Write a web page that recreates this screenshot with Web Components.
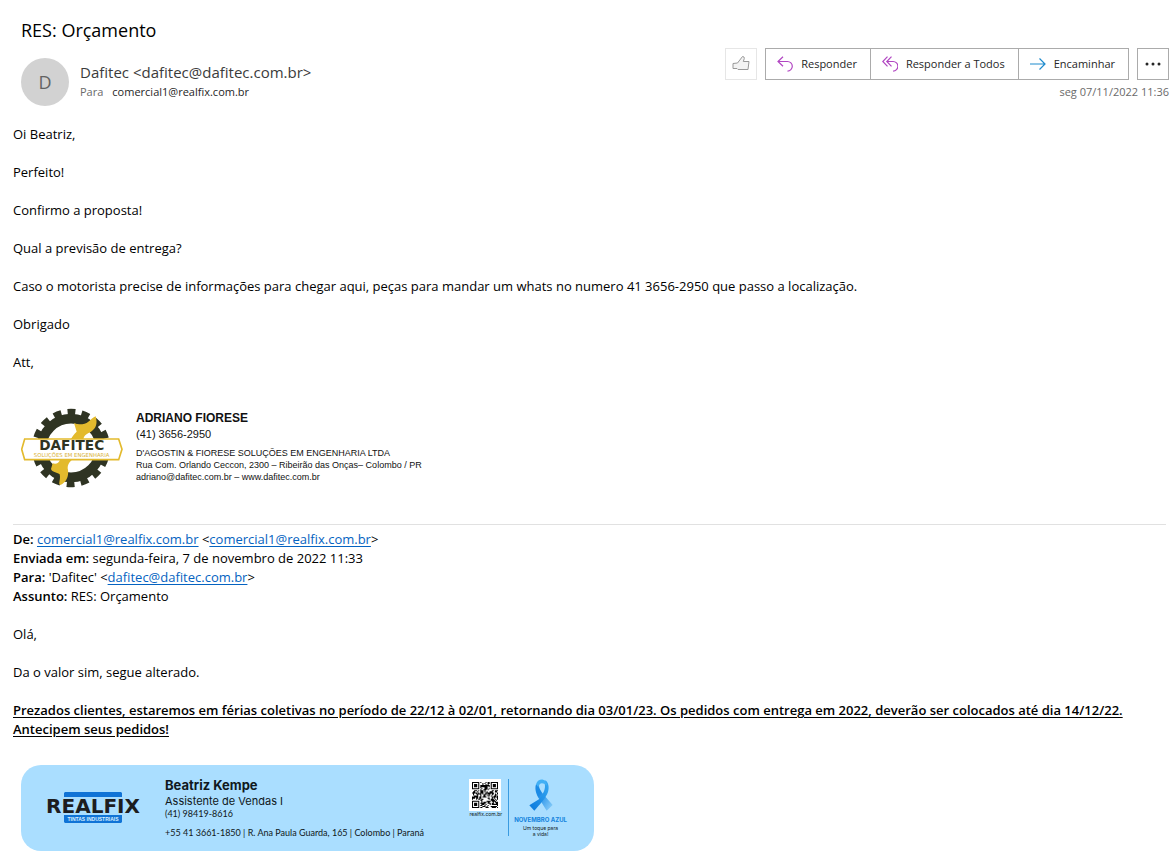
<!DOCTYPE html>
<html lang="pt-BR">
<head>
<meta charset="utf-8">
<meta name="viewport" content="width=device-width, initial-scale=1">
<title>RES: Orçamento</title>
<style>
body { margin: 0; background: #fff; color: #000; font-family: "Open Sans", "Noto Sans", sans-serif; }
</style>
</head>
<body>
<mail-header>
  <span slot="subject">RES: Orçamento</span>
  <span slot="initial">D</span>
  <span slot="from">Dafitec &lt;dafitec@dafitec.com.br&gt;</span>
  <span slot="to">comercial1@realfix.com.br</span>
  <mail-actions slot="actions"></mail-actions>
  <time slot="date" datetime="2022-11-07T11:36">seg 07/11/2022 11:36</time>
</mail-header>
<mail-body>
  <mail-text>Oi Beatriz,</mail-text>
  <mail-text>Perfeito!</mail-text>
  <mail-text>Confirmo a proposta!</mail-text>
  <mail-text>Qual a previsão de entrega?</mail-text>
  <mail-text>Caso o motorista precise de informações para chegar aqui, peças para mandar um whats no numero 41 3656-2950 que passo a localização.</mail-text>
  <mail-text>Obrigado</mail-text>
  <mail-text>Att,</mail-text>
  <dafitec-signature></dafitec-signature>
  <quoted-header></quoted-header>
  <mail-text>Olá,</mail-text>
  <mail-text>Da o valor sim, segue alterado.</mail-text>
  <mail-text notice>Prezados clientes, estaremos em férias coletivas no período de 22/12 à 02/01, retornando dia 03/01/23. Os pedidos com entrega em 2022, deverão ser colocados até dia 14/12/22. Antecipem seus pedidos!</mail-text>
  <realfix-card></realfix-card>
</mail-body>

<script>
class BaseElement extends HTMLElement {
  constructor() {
    super();
    this.attachShadow({ mode: "open" }).innerHTML = this.constructor.markup;
  }
}

customElements.define("mail-header", class extends BaseElement {
  static markup = `
    <style>
      :host { display: block; padding: 18px 3px 0 21px; }
      h1 { margin: 0 0 6px; font-size: 18px; font-weight: 400; line-height: 24px; }
      .row { display: flex; justify-content: space-between; gap: 16px; }
      .sender { display: flex; gap: 11px; padding-top: 10px; }
      .avatar { width: 48px; height: 48px; border-radius: 50%; background: #d2d2d2; color: #636363;
        font-size: 18px; line-height: 48px; text-align: center; }
      .who { padding-top: 5px; color: #3b3b3b; }
      .from { font-size: 15px; line-height: 18px; margin-bottom: 3px; }
      .to { display: flex; gap: 9px; font-size: 11px; line-height: 16px; color: #262626; }
      .label { color: #6a6a6a; }
      .side { display: flex; flex-direction: column; align-items: flex-end; gap: 4px; }
      .date { font-size: 11px; line-height: 16px; color: #6a6a6a; }
    </style>
    <h1><slot name="subject"></slot></h1>
    <div class="row">
      <div class="sender">
        <div class="avatar"><slot name="initial"></slot></div>
        <div class="who">
          <div class="from"><slot name="from"></slot></div>
          <div class="to"><span class="label">Para</span><slot name="to"></slot></div>
        </div>
      </div>
      <div class="side"><slot name="actions"></slot><div class="date"><slot name="date"></slot></div></div>
    </div>`;
});

customElements.define("mail-actions", class extends BaseElement {
  static markup = `
    <style>
      :host { display: flex; gap: 8px; }
      .group { display: flex; }
      button { display: flex; align-items: center; gap: 8px; box-sizing: border-box; height: 32px; margin: 0;
        padding: 0 13px 0 11px; border: 1px solid #ababab; border-radius: 0; background: #fff; color: #262626;
        font-family: inherit; font-size: 11px; line-height: 16px; white-space: nowrap; }
      .group button + button { border-left: 0; }
      .square { width: 32px; padding: 0; justify-content: center; }
      .like { border-color: #e6e6e6; }
      svg { display: block; fill: none; }
    </style>
    <button class="square like" type="button" aria-label="Curtir">
      <svg width="18" height="18" viewBox="0 0 18 18"><path d="M1 8.5 5.5 8 10.5 1.5 12 2 12.3 3.5 11.3 6.5H17L16 14.5H6L5 13.5H1z" fill="#f3f3f3" stroke="#999" stroke-linejoin="round"/></svg>
    </button>
    <div class="group">
      <button type="button"><svg width="16" height="16" viewBox="0 0 16 16" stroke="#b146c2" stroke-width="1.2"><path d="M6 .7 1 5.5l5 4.8M1 5.5h9.5a4.7 4.7 0 0 1 0 9.6"/></svg>Responder</button>
      <button type="button"><svg width="16" height="16" viewBox="0 0 16 16" stroke="#b146c2" stroke-width="1.2"><path d="M5.5 .7.8 5.5l4.7 4.8M9.5.7 4.8 5.5l4.7 4.8M4.8 5.5h6.3a4.7 4.7 0 0 1 0 9.6"/></svg>Responder a Todos</button>
      <button type="button"><svg width="16" height="16" viewBox="0 0 16 16" stroke="#1e8bcd" stroke-width="1.2"><path d="M0 8h15M9.5 2.5 15 8l-5.5 5.5"/></svg>Encaminhar</button>
    </div>
    <button class="square" type="button" aria-label="Mais ações">
      <svg width="16" height="4" viewBox="0 0 16 4" style="fill:#262626"><circle cx="2" cy="2" r="1.5"/><circle cx="8" cy="2" r="1.5"/><circle cx="14" cy="2" r="1.5"/></svg>
    </button>`;
});

customElements.define("mail-body", class extends BaseElement {
  static markup = `
    <style>
      :host { display: flex; flex-direction: column; gap: 19px; padding: 19px 6px 3px 13px; font-size: 13px; line-height: 19px; }
    </style>
    <slot></slot>`;
});

customElements.define("mail-text", class extends BaseElement {
  static markup = `
    <style>
      :host { display: block; }
      p { margin: 0; }
      :host([notice]) p { font-weight: 600; text-decoration: underline; text-underline-offset: 2px; }
    </style>
    <p><slot></slot></p>`;
});

customElements.define("dafitec-signature", class extends BaseElement {
  static markup = `
    <style>
      :host { display: flex; gap: 13px; margin: 17px 0 17px 8px; color: #111;
        font-family: "Liberation Sans", Arial, sans-serif; font-size: 9px; line-height: 12px; }
      svg { display: block; flex: none; }
      .name { font-size: 12px; font-weight: 700; line-height: 16px; padding-top: 2px; }
      .phone { font-size: 11px; line-height: 16px; margin-bottom: 5px; }
    </style>
    <svg width="102" height="80" viewBox="33 39 306 240" role="img" aria-label="Dafitec">
      <g fill="none" stroke="#2f3423">
        <circle cx="183" cy="159" r="88" stroke-width="29"/>
        <circle cx="183" cy="159" r="108" stroke-width="19" pathLength="320" stroke-dasharray="11 9" stroke-dashoffset="5"/>
      </g>
      <path fill="#e3ba2d" d="M192 84c12 6 32 5 43-4 9-6 11-11 22-16 6 20 2 37-14 46-13 7-20 10-23 22h-37c5-9 9-14 17-22zM150 194h36c-10 9-15 18-12 31 3 19-6 38-23 45-8-2 2-16-2-32-10-8-22-5-26-16l5-17c12 3 18-1 22-11z"/>
      <path fill="#fff" stroke="#e3ba2d" stroke-width="5" d="M44 132h282l10 31-10 31H44l-9-31z"/>
      <g text-anchor="middle" font-family="DejaVu Sans, sans-serif">
        <text x="185" y="166" font-size="41" font-weight="700" fill="#2f3423">DAFITEC</text>
        <text x="185" y="186" font-size="16" fill="#d9b33a">SOLUÇÕES EM ENGENHARIA</text>
      </g>
    </svg>
    <div>
      <div class="name">ADRIANO FIORESE</div>
      <div class="phone">(41) 3656-2950</div>
      <div>D'AGOSTIN &amp; FIORESE SOLUÇÕES EM ENGENHARIA LTDA</div>
      <div>Rua Com. Orlando Ceccon, 2300 – Ribeirão das Onças– Colombo / PR</div>
      <div>adriano@dafitec.com.br – www.dafitec.com.br</div>
    </div>`;
});

customElements.define("quoted-header", class extends BaseElement {
  static markup = `
    <style>
      :host { display: block; border-top: 1px solid #e1e1e1; padding-top: 5px; }
      b { font-weight: 600; }
      a { color: #0563c1; text-underline-offset: 2px; }
    </style>
    <div><b>De:</b> <a href="mailto:comercial1@realfix.com.br">comercial1@realfix.com.br</a> &lt;<a href="mailto:comercial1@realfix.com.br">comercial1@realfix.com.br</a>&gt;</div>
    <div><b>Enviada em:</b> segunda-feira, 7 de novembro de 2022 11:33</div>
    <div><b>Para:</b> 'Dafitec' &lt;<a href="mailto:dafitec@dafitec.com.br">dafitec@dafitec.com.br</a>&gt;</div>
    <div><b>Assunto:</b> RES: Orçamento</div>`;
});

customElements.define("qr-code", class extends BaseElement {
  static markup = `
    <style>
      :host { display: block; box-sizing: border-box; width: 32px; height: 32px; padding: 3px; background: #fff; }
      svg { display: block; width: 100%; height: 100%; }
    </style>
    <svg viewBox="0 0 25 25" role="img" aria-label="QR code"><path/></svg>`;
  connectedCallback() {
    const size = 25;
    let seed = 71, d = "";
    const finder = (x, y) => {
      for (const [cx, cy] of [[0, 0], [size - 7, 0], [0, size - 7]]) {
        const dx = x - cx, dy = y - cy;
        if (dx >= -1 && dx <= 7 && dy >= -1 && dy <= 7) {
          const ring = Math.max(Math.abs(dx - 3), Math.abs(dy - 3));
          return ring === 3 || ring <= 1;
        }
      }
      return null;
    };
    for (let y = 0; y < size; y++) for (let x = 0; x < size; x++) {
      seed = (seed * 1103515245 + 12345) % 2147483648;
      const f = finder(x, y);
      if (f === null ? (seed >> 16) % 2 : f) d += `M${x} ${y}h1v1h-1z`;
    }
    this.shadowRoot.querySelector("path").setAttribute("d", d);
  }
});

customElements.define("realfix-card", class extends BaseElement {
  static markup = `
    <style>
      :host { display: flex; box-sizing: border-box; width: 100%; max-width: 573px; margin: 7px 0 0 8px;
        padding: 0 25px; border-radius: 20px; background: #aadeff; color: #101820;
        font-family: Inter, sans-serif; }
      svg { display: block; }
      .logo { flex: none; padding: 27px 25px 0 0; }
      .person { flex: 1; padding: 11px 0 12px; font-family: Lato, sans-serif; font-size: 9px; line-height: 12px; }
      .name { font: 700 13px/18px Inter, sans-serif; }
      .role { font: 400 11px/14px Inter, sans-serif; }
      .phone { margin-bottom: 7px; }
      .site, .campaign { margin: 14px 0; text-align: center; font-size: 5px; line-height: 6px; }
      .site { padding-right: 6px; }
      .site a { display: block; color: inherit; text-decoration: none; }
      .campaign { padding: 0 2px 0 5px; border-left: 1px solid #3a9be0; height: 57px; }
      .campaign svg { margin: 0 auto 4px; }
      .campaign b { display: block; font-size: 6px; line-height: 10px; color: #1383dd; }
    </style>
    <svg class="logo" width="94" height="32" viewBox="46 792 94 32" role="img" aria-label="Realfix Tintas Industriais">
      <path fill="#1073d6" d="M65 792h56l1 1v4H64v-4zM64 815h58v7l-1 1H65l-1-1z"/>
      <g text-anchor="middle">
        <text x="93" y="813" font-family="DejaVu Sans, sans-serif" font-size="20" font-weight="700" fill="#1d1d1f">REALFIX</text>
        <text x="93" y="821" font-family="Liberation Sans, sans-serif" font-size="5" font-weight="700" fill="#d8efff">TINTAS INDUSTRIAIS</text>
      </g>
    </svg>
    <div class="person">
      <div class="name">Beatriz Kempe</div>
      <div class="role">Assistente de Vendas I</div>
      <div class="phone">(41) 98419-8616</div>
      <div>+55 41 3661-1850 | R. Ana Paula Guarda, 165 | Colombo | Paraná</div>
    </div>
    <div class="site"><qr-code></qr-code><a href="https://realfix.com.br">realfix.com.br</a></div>
    <div class="campaign">
      <svg width="24" height="32" viewBox="206 26 72 96" aria-hidden="true">
        <defs>
          <linearGradient id="tail" x2="1" y2="1"><stop offset=".3" stop-color="#1b8be6"/><stop offset="1" stop-color="#93d3fb"/></linearGradient>
          <linearGradient id="band" x1="1" x2="0" y2="1"><stop stop-color="#38a9f2"/><stop offset="1" stop-color="#0878dc"/></linearGradient>
        </defs>
        <path fill="url(#tail)" d="M227 42c-6 18 4 38 14 50l18 29 18-17-27-31c-9-11-15-20-14-29z"/>
        <path fill="url(#band)" d="M253 40c4 14-4 30-16 46l-30 19 15 16c16-18 35-38 41-56 5-16 0-30-8-35z"/>
        <path fill="#42b0f5" d="M227 42c4-12 12-15 21-14 6 1 12 7 12 18-6-5-11-7-15-7-6 0-10 5-11 12z"/>
      </svg>
      <b>NOVEMBRO AZUL</b>
      <div>Um toque para<br>a vida!</div>
    </div>`;
});
</script>
</body>
</html>
